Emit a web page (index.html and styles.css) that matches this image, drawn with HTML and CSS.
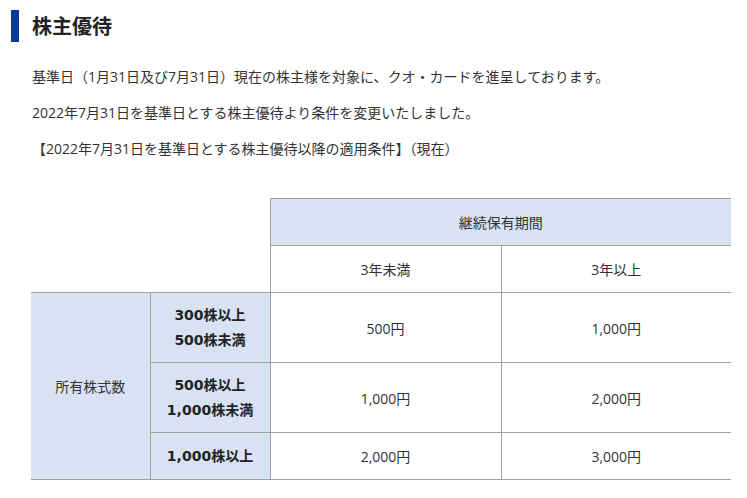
FILE: index.html
```html
<!DOCTYPE html>
<html lang="ja">
<head>
<meta charset="utf-8">
<title>株主優待</title>
<link rel="stylesheet" href="styles.css">
</head>
<body>
<div class="page">
  <h2 class="title">株主優待</h2>
  <div class="intro">
    <p>基準日（1月31日及び7月31日）現在の株主様を対象に、クオ・カードを進呈しております。</p>
    <p>2022年7月31日を基準日とする株主優待より条件を変更いたしました。</p>
    <p>【2022年7月31日を基準日とする株主優待以降の適用条件】（現在）</p>
  </div>
  <table class="benefit">
    <colgroup>
      <col class="c1"><col class="c2"><col class="c3"><col class="c4">
    </colgroup>
    <tr class="r-short">
      <td class="blank" colspan="2" rowspan="2"></td>
      <th class="head" colspan="2">継続保有期間</th>
    </tr>
    <tr class="r-short">
      <td>3年未満</td>
      <td class="last">3年以上</td>
    </tr>
    <tr class="r-tall">
      <th class="head first" rowspan="3">所有株式数</th>
      <th class="head sub">300株以上<br>500株未満</th>
      <td>500円</td>
      <td class="last">1,000円</td>
    </tr>
    <tr class="r-tall">
      <th class="head sub">500株以上<br>1,000株未満</th>
      <td>1,000円</td>
      <td class="last">2,000円</td>
    </tr>
    <tr class="r-short">
      <th class="head sub">1,000株以上</th>
      <td>2,000円</td>
      <td class="last">3,000円</td>
    </tr>
  </table>
</div>
</body>
</html>
```

FILE: styles.css
```css
html, body {
  margin: 0;
  padding: 0;
  background: #ffffff;
}

body {
  font-family: "Open Sans", "Noto Sans CJK JP", sans-serif;
  font-size: 14px;
  color: #333333;
}

.page {
  padding: 10px 0 0 11px;
}

.title {
  margin: 0;
  height: 32px;
  line-height: 32px;
  border-left: 8px solid #0b3a96;
  padding-left: 13px;
  font-family: "Noto Sans CJK JP", sans-serif;
  font-size: 20px;
  font-weight: 700;
  color: #222222;
}

.intro {
  padding: 24px 0 0 21px;
}

.intro p {
  margin: 0 0 14px 0;
  line-height: 22px;
}

.intro p:last-child {
  margin-bottom: 0;
}

.benefit {
  margin: 38px 0 0 20px;
  width: 700px;
  border-collapse: collapse;
  table-layout: fixed;
}

.c1 { width: 119px; }
.c2 { width: 120px; }
.c3 { width: 231px; }
.c4 { width: 230px; }

.benefit th,
.benefit td {
  border: 1px solid #a2a2a2;
  text-align: center;
  vertical-align: middle;
  padding: 0;
  font-weight: 400;
  color: #333333;
}

.r-short { height: 47px; }
.r-tall { height: 70px; }

.benefit .blank {
  border: none;
  background: #ffffff;
}

.benefit .head {
  background: #d9e2f2;
}

.benefit .first {
  border-left: none;
}

.benefit .last {
  border-right: none;
}

.benefit .head[colspan] {
  border-right: none;
}

.benefit .sub {
  font-family: "DejaVu Sans", "Noto Sans CJK JP", sans-serif;
  font-weight: 700;
  line-height: 25px;
  color: #222222;
}
```
